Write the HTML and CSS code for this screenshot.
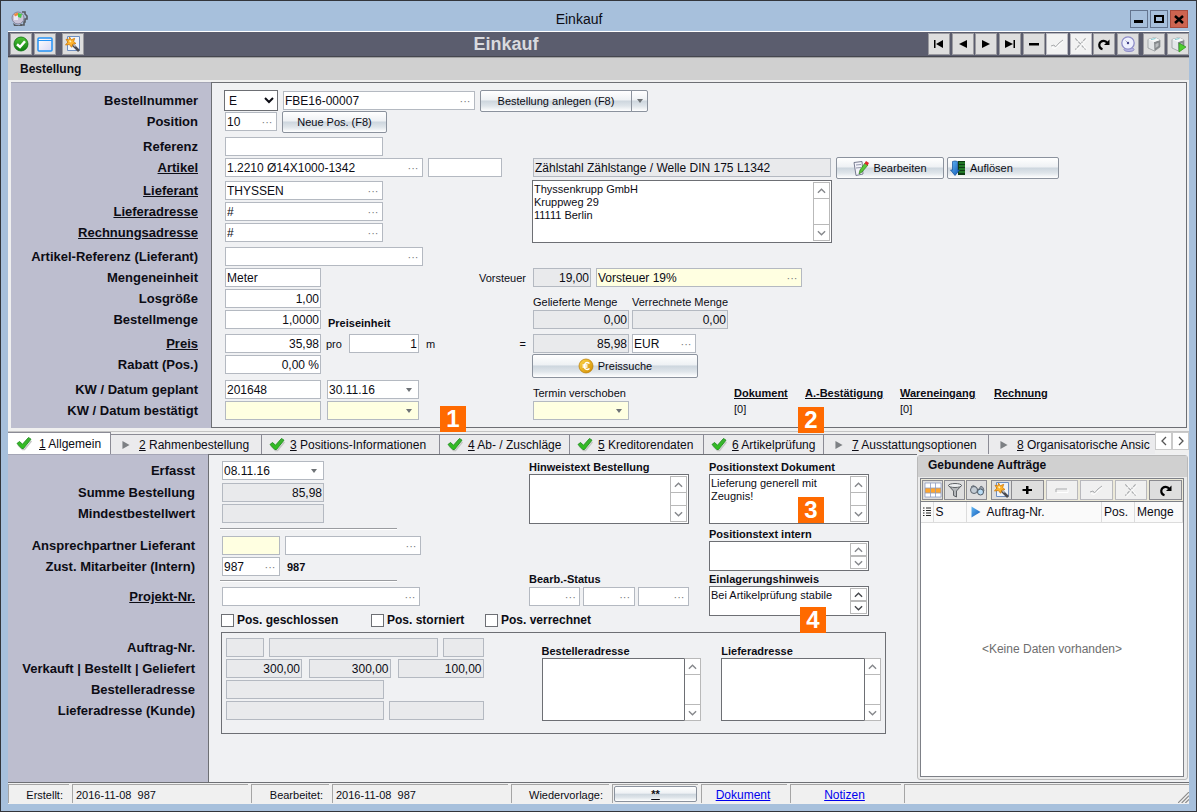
FILE: index.html
```html
<!DOCTYPE html>
<html lang="de">
<head>
<meta charset="utf-8">
<title>Einkauf</title>
<link rel="stylesheet" href="styles.css">
</head>
<body>
<svg class="defs" aria-hidden="true">
  <defs>
    <linearGradient id="gGreen" x1="0" y1="0" x2="0" y2="1"><stop offset="0" stop-color="#4fc436"/><stop offset="1" stop-color="#0c7d10"/></linearGradient>
    <linearGradient id="gCheck" x1="0" y1="0" x2="0" y2="1"><stop offset="0" stop-color="#3fae35"/><stop offset="1" stop-color="#2dc21c"/></linearGradient>
    <linearGradient id="gBlue" x1="0" y1="0" x2="1" y2="1"><stop offset="0" stop-color="#62b8f4"/><stop offset="1" stop-color="#1259b8"/></linearGradient>
    <linearGradient id="gPane" x1="0" y1="0" x2="1" y2="1"><stop offset="0" stop-color="#ffffff"/><stop offset="1" stop-color="#d8d8f4"/></linearGradient>
    <linearGradient id="gGold" x1="0" y1="0" x2="1" y2="1"><stop offset="0" stop-color="#ffd84a"/><stop offset="1" stop-color="#d08a00"/></linearGradient>
  </defs>
  <symbol id="up" viewBox="0 0 10 6"><path d="M1 5 5 1 9 5" fill="none" stroke="currentColor" stroke-width="1.5"/></symbol>
  <symbol id="down" viewBox="0 0 10 6"><path d="M1 1 5 5 9 1" fill="none" stroke="currentColor" stroke-width="1.5"/></symbol>
  <symbol id="tri" viewBox="0 0 6 4"><path d="M0 0H6L3 4Z" fill="#6e7276"/></symbol>
  <symbol id="check" viewBox="0 0 16 16"><path d="M2 9 6.500 13.500H8.500L15.500 5" fill="none" stroke="#c3c6c3" stroke-width="1.500"/><path d="M1 7.500 3.500 5.500 6.500 8.200 12.500 1.500 15 3.200 7.500 12.500H5.800Z" fill="url(#gCheck)" stroke="#1f8f1d" stroke-width=".9" stroke-linejoin="round"/></symbol>
  <symbol id="play" viewBox="0 0 8 9"><path d="M0 0 8 4.500 0 9Z" fill="#7d8084"/></symbol>
  <symbol id="wand" viewBox="0 0 18 18"><path d="M3.500 1.500H15.500V15.500H3.500Z" fill="#eef3fb" stroke="#6f8fc0"/><path d="M8 9 15 16" stroke="#4a4a50" stroke-width="2.600"/><path d="M9 9 11.500 11.500" stroke="#b9bcc4" stroke-width="1.500"/><path d="M5.500 2 7.300 4.800 10.700 3.300 9.600 6.500 12 8.600 8.800 9 7.600 12.300 5.400 9.500 1.500 10 3.800 7.200 2 4.200 5 5Z" fill="#ffb52e" stroke="#cf7a08" stroke-width=".8"/><path d="M5.500 5.500 7 7" stroke="#fff0b8" stroke-width="1.500"/></symbol>
  <symbol id="reload" viewBox="0 0 16 16"><path d="M6.500 13.200Q3 12 3.300 8.500 4 4.800 7.800 4.800 10 4.800 11.300 6.800" fill="none" stroke="#000" stroke-width="2.200"/><path d="M13.500 3.500V9H8Z"/></symbol>
  <symbol id="cube" viewBox="0 0 18 18"><path d="M3 4.500 10 2.500 15 5V12L9.500 16 3 13Z" fill="#e3e6e8" stroke="#8b9094" stroke-width=".7"/><path d="M9 7 15 5V12L9.500 16Z" fill="#85898c"/><path d="M10.500 9 13.500 7.800V11L10.500 13Z" fill="#b9bdbf"/><path d="M3 4.500 9 7 15 5 10 2.500Z" fill="#f6f8f8"/><path d="M6 4.500 10.500 3.500" stroke="#7cc7ce" stroke-width="1.200"/></symbol>
  <symbol id="tick" viewBox="0 0 16 12"><path d="M2 8 5 7 6.500 9 10 5 14 2" fill="none" stroke="#a9abad"/><path d="M3 9.500 6 10.500 14 3.500" fill="none" stroke="#fff"/></symbol>
  <symbol id="cross" viewBox="0 0 14 14"><path d="M2 2 11 12M11 2 2 12" fill="none" stroke="#a9abad" stroke-dasharray="3 1"/><path d="M3.500 2 12 11.500M12 3 3 13" stroke="#fff" stroke-width=".7"/></symbol>
</svg>

<div class="window">
  <header class="titlebar">
    <svg class="i18" viewBox="0 0 18 18"><path d="M12 2H15V4L17 6V9H15V12H14V15H10" fill="none" stroke="#55595f" stroke-width="1.600"/><circle cx="8" cy="8" r="6" fill="#c9c4d8" stroke="#85839a"/><path d="M4 6Q6 4 8 6V10H4Z" fill="#ece8f4"/><path d="M8 3 12 4 11 8 8 7Z" fill="#46c84a"/><path d="M4 4 8 2.500V5L5 6.500Z" fill="#ee8a3c"/><path d="M3 13Q8 17 12 14V16H4Z" fill="#55595f"/></svg>
    <h1 class="window-title">Einkauf</h1>
    <div class="window-buttons">
      <button class="wbtn" aria-label="Minimieren"><svg class="i16" viewBox="0 0 16 16"><path d="M3 9H12V12H3Z"/></svg></button>
      <button class="wbtn" aria-label="Maximieren"><svg class="i16" viewBox="0 0 16 16"><path d="M4 5H12V11H4Z" fill="none" stroke="#000" stroke-width="2"/></svg></button>
      <button class="wbtn close" aria-label="Schließen"><svg class="i16" viewBox="0 0 16 16"><path d="M4 5 12 12M12 5 4 12" stroke="#000" stroke-width="2.500"/></svg></button>
    </div>
  </header>

  <div class="client">
    <div class="toolbar">
      <button class="tbtn" aria-label="Übernehmen"><svg class="i18" viewBox="0 0 18 18"><circle cx="9" cy="9" r="7" fill="url(#gGreen)" stroke="#0b7010" stroke-width=".8"/><path d="M5 9.300 8 12 13 6.300" fill="none" stroke="#fff" stroke-width="2.500"/></svg></button>
      <button class="tbtn" aria-label="Fenster"><svg class="i18" viewBox="0 0 18 18"><rect x="2" y="3" width="14" height="13" rx="1" fill="url(#gPane)" stroke="#2493f5" stroke-width="1.500"/><path d="M2 5.500H16" stroke="#2493f5"/></svg></button>
      <button class="tbtn apart" aria-label="Assistent"><svg class="i18"><use href="#wand"/></svg></button>
      <h2 class="toolbar-title">Einkauf</h2>
      <div class="nav">
        <button class="tbtn" aria-label="Erster"><svg class="i16" viewBox="0 0 16 16"><path d="M3 4H4.500V12H3ZM12 4V12L5 8Z"/></svg></button>
        <button class="tbtn" aria-label="Zurück"><svg class="i16" viewBox="0 0 16 16"><path d="M12 4V12L4 8Z"/></svg></button>
        <button class="tbtn" aria-label="Weiter"><svg class="i16" viewBox="0 0 16 16"><path d="M4 4V12L12 8Z"/></svg></button>
        <button class="tbtn" aria-label="Letzter"><svg class="i16" viewBox="0 0 16 16"><path d="M11.500 4H13V12H11.500ZM3 4V12L11 8Z"/></svg></button>
        <button class="tbtn" aria-label="Löschen"><svg class="i16" viewBox="0 0 16 16"><path d="M3 7H13V9.500H3Z"/></svg></button>
        <button class="tbtn off" aria-label="Speichern" disabled><svg class="i16"><use href="#tick"/></svg></button>
        <button class="tbtn off" aria-label="Verwerfen" disabled><svg class="i16"><use href="#cross"/></svg></button>
        <button class="tbtn" aria-label="Aktualisieren"><svg class="i16"><use href="#reload"/></svg></button>
        <button class="tbtn" aria-label="Verlauf"><svg class="i18" viewBox="0 0 18 18"><ellipse cx="10" cy="14.500" rx="5" ry="2" fill="#b9b8e6" stroke="#8c8bc6"/><circle cx="9" cy="8" r="6.200" fill="#eef0fd" stroke="#8d8cc8" stroke-width="1.300"/><path d="M9 8 6.500 5.500" stroke="#aab"/><circle cx="9" cy="8" r="1.200" fill="#40418a"/></svg></button>
      </div>
      <button class="tbtn" aria-label="Paket"><svg class="i18"><use href="#cube"/></svg></button>
      <button class="tbtn" aria-label="Paket starten"><svg class="i18" viewBox="0 0 18 18"><use href="#cube"/><path d="M10 8 17 12 10 17Z" fill="#4fce2f" stroke="#2b8f1b" stroke-width=".7"/></svg></button>
    </div>

    <h3 class="section-head">Bestellung</h3>

    <section class="order">
      <div class="labels">
        <label class="lb" for="bn">Bestellnummer</label>
        <label class="lb" for="pos">Position</label>
        <label class="lb gap4" for="ref">Referenz</label>
        <a class="lb" href="#art">Artikel</a>
        <a class="lb gap2" href="#lief">Lieferant</a>
        <a class="lb" href="#la">Lieferadresse</a>
        <a class="lb" href="#ra">Rechnungsadresse</a>
        <label class="lb gap3" for="ar">Artikel-Referenz (Lieferant)</label>
        <label class="lb" for="me">Mengeneinheit</label>
        <label class="lb" for="lg">Losgröße</label>
        <label class="lb" for="bm">Bestellmenge</label>
        <a class="lb gap3" href="#pr">Preis</a>
        <label class="lb" for="rb">Rabatt (Pos.)</label>
        <label class="lb gap4" for="kg">KW / Datum geplant</label>
        <label class="lb" for="kb">KW / Datum bestätigt</label>
      </div>

      <div class="fields">
        <div class="row">
          <select class="kind" aria-label="Art"><option>E</option></select>
          <span class="box w192"><input id="bn" value="FBE16-00007"><button class="dots" aria-label="Auswahl">···</button></span>
          <span class="split"><button class="btn w152">Bestellung anlegen (F8)</button><button class="btn drop" aria-label="Mehr"><svg class="tri"><use href="#tri"/></svg></button></span>
        </div>
        <div class="row">
          <span class="box w52"><input id="pos" value="10"><button class="dots" aria-label="Auswahl">···</button></span>
          <button class="btn w105">Neue Pos. (F8)</button>
        </div>
        <div class="row gap4"><span class="box w158"><input id="ref"></span></div>

        <div class="split-cols">
          <div class="col-left">
            <div class="row">
              <span class="box w198"><input id="art" value="1.2210 Ø14X1000-1342"><button class="dots" aria-label="Auswahl">···</button></span>
              <span class="box w74"><input aria-label="Artikel Zusatz"></span>
            </div>
            <div class="row gap2"><span class="box w158"><input id="lief" value="THYSSEN"><button class="dots" aria-label="Auswahl">···</button></span></div>
            <div class="row"><span class="box w158"><input id="la" value="#"><button class="dots" aria-label="Auswahl">···</button></span></div>
            <div class="row"><span class="box w158"><input id="ra" value="#"><button class="dots" aria-label="Auswahl">···</button></span></div>
            <div class="row gap3"><span class="box w198"><input id="ar"><button class="dots" aria-label="Auswahl">···</button></span></div>
            <div class="row"><span class="box w96"><input id="me" value="Meter"></span><label class="small push" for="vs">Vorsteuer</label></div>
            <div class="row"><span class="box w96 num"><input id="lg" value="1,00"></span></div>
            <div class="row"><span class="box w96 num"><input id="bm" value="1,0000"></span><label class="smallb lead low" for="pe">Preiseinheit</label></div>
            <div class="row gap3">
              <span class="box w96 num"><input id="pr" value="35,98"></span>
              <span class="small">pro</span>
              <span class="box w70 num lead"><input id="pe" value="1"></span>
              <span class="small lead">m</span>
              <span class="small push">=</span>
            </div>
            <div class="row"><span class="box w96 num"><input id="rb" value="0,00 %"></span></div>
            <div class="row gap4 dates">
              <span class="box w96"><input id="kg" value="201648"></span>
              <span class="box w92"><input aria-label="Datum geplant" value="30.11.16"><button class="pick" aria-label="Kalender"><svg class="tri"><use href="#tri"/></svg></button></span>
            </div>
            <div class="row dates">
              <span class="box w96 yellow"><input id="kb"></span>
              <span class="box w92 yellow"><input aria-label="Datum bestätigt"><button class="pick" aria-label="Kalender"><svg class="tri"><use href="#tri"/></svg></button></span>
            </div>
          </div>

          <div class="col-right">
            <div class="row">
              <span class="box w298 ro"><input aria-label="Artikeltext" value="Zählstahl Zählstange / Welle DIN 175 L1342" readonly></span>
              <button class="btn w108"><svg class="i16" viewBox="0 0 16 16"><path d="M1 2.500 9 1.500 10 14 3 15.500Z" fill="#f4f4fb" stroke="#777c90"/><path d="M3 5 8 4.500M3 8 8 7.500" stroke="#9297ab"/><path d="M6 14 7 10 12 3 15 5 9 12Z" fill="#5cc63a" stroke="#2c7d1c" stroke-width=".7"/><path d="M11.500 3.500 13 1 16 3 14.500 5.500Z" fill="#e0262a"/></svg>Bearbeiten</button>
              <button class="btn w112 start"><svg class="i16" viewBox="0 0 16 16"><path d="M8 1H15V15H8Z" fill="#0f3d16"/><path d="M9 3H15M9 6H15M9 9H15M9 12H15" stroke="#37b53a" stroke-width="1.200"/><path d="M2.500 1.500Q5 .5 7.500 1.500V10H9.500L5 15.500.500 10H2.500Z" fill="url(#gBlue)" stroke="#0f4c9c" stroke-width=".7"/></svg>Auflösen</button>
            </div>
            <div class="memo w300 h63 tight">
              <textarea aria-label="Lieferantenadresse">Thyssenkrupp GmbH
Kruppweg 29
11111 Berlin</textarea>
              <span class="sb"><button aria-label="Hoch"><svg><use href="#up"/></svg></button><button aria-label="Runter"><svg><use href="#down"/></svg></button></span>
            </div>
            <div class="row vat">
              <span class="box w58 ro num"><input id="vs" value="19,00" readonly></span>
              <span class="box w206 yellow"><input aria-label="Vorsteuer Art" value="Vorsteuer 19%"><button class="dots" aria-label="Auswahl">···</button></span>
            </div>
            <div class="row low caption"><label class="small w96" for="gm">Gelieferte Menge</label><label class="small w96" for="vm">Verrechnete Menge</label></div>
            <div class="row caption">
              <span class="box w96 ro num"><input id="gm" value="0,00" readonly></span>
              <span class="box w96 ro num"><input id="vm" value="0,00" readonly></span>
            </div>
            <div class="row gap3 caption">
              <span class="box w96 ro num"><input aria-label="Betrag" value="85,98" readonly></span>
              <span class="box w64"><input aria-label="Währung" value="EUR"><button class="dots" aria-label="Auswahl">···</button></span>
            </div>
            <button class="btn w166 tall"><svg class="i16" viewBox="0 0 16 16"><circle cx="8" cy="8" r="7" fill="url(#gGold)" stroke="#b87800" stroke-width=".7"/><path d="M11.500 5.500Q8.500 3.200 6.800 6 5.500 9.500 7.500 11 9.500 12.200 11.500 10.500M4.500 7H9.500M4.500 9H9.500" fill="none" stroke="#fff" stroke-width="1.400"/></svg>Preissuche</button>
            <div class="bottom-line">
              <div class="stack w96">
                <label class="small" for="tv">Termin verschoben</label>
                <span class="box w96 yellow"><input id="tv"><button class="pick" aria-label="Kalender"><svg class="tri"><use href="#tri"/></svg></button></span>
              </div>
              <div class="docs">
                <div><a href="#dok">Dokument</a><span>[0]</span></div>
                <div><a href="#ab">A.-Bestätigung</a></div>
                <div><a href="#we">Wareneingang</a><span>[0]</span></div>
                <div><a href="#re">Rechnung</a></div>
              </div>
            </div>
          </div>
        </div>
      </div>
      <span class="badge b1">1</span>
      <span class="badge b2">2</span>
    </section>

    <nav class="tabs" role="tablist">
      <button class="tab t103 active" role="tab" aria-selected="true"><svg class="i16"><use href="#check"/></svg><span><u>1</u> Allgemein</span></button>
      <button class="tab t151" role="tab"><svg class="i16 play"><use href="#play"/></svg><span><u>2</u> Rahmenbestellung</span></button>
      <button class="tab t178" role="tab"><svg class="i16"><use href="#check"/></svg><span><u>3</u> Positions-Informationen</span></button>
      <button class="tab t130" role="tab"><svg class="i16"><use href="#check"/></svg><span><u>4</u> Ab- / Zuschläge</span></button>
      <button class="tab t134" role="tab"><svg class="i16"><use href="#check"/></svg><span><u>5</u> Kreditorendaten</span></button>
      <button class="tab t120" role="tab"><svg class="i16"><use href="#check"/></svg><span><u>6</u> Artikelprüfung</span></button>
      <button class="tab t165" role="tab"><svg class="i16 play"><use href="#play"/></svg><span><u>7</u> Ausstattungsoptionen</span></button>
      <button class="tab last" role="tab"><svg class="i16 play"><use href="#play"/></svg><span><u>8</u> Organisatorische Ansic</span></button>
      <span class="scroller"><button aria-label="Links"><svg class="i8" viewBox="0 0 6 10"><path d="M5 1 1 5 5 9" fill="none" stroke="#555" stroke-width="1.300"/></svg></button><button aria-label="Rechts"><svg class="i8" viewBox="0 0 6 10"><path d="M1 1 5 5 1 9" fill="none" stroke="#555" stroke-width="1.300"/></svg></button></span>
    </nav>

    <section class="details">
      <div class="labels">
        <label class="lb" for="er">Erfasst</label>
        <label class="lb gap1" for="sb">Summe Bestellung</label>
        <label class="lb" for="mb">Mindestbestellwert</label>
        <label class="lb gap11" for="ap">Ansprechpartner Lieferant</label>
        <label class="lb" for="zm">Zust. Mitarbeiter (Intern)</label>
        <a class="lb gap9" href="#pn">Projekt-Nr.</a>
        <label class="lb gap30" for="an">Auftrag-Nr.</label>
        <label class="lb" for="vb">Verkauft | Bestellt | Geliefert</label>
        <label class="lb" for="ba">Bestelleradresse</label>
        <label class="lb" for="lk">Lieferadresse (Kunde)</label>
      </div>

      <div class="detail-form">
        <div class="upper">
          <div class="col-a">
            <div class="row"><span class="box w102"><input id="er" value="08.11.16"><button class="pick" aria-label="Kalender"><svg class="tri"><use href="#tri"/></svg></button></span></div>
            <div class="row gap1"><span class="box w102 ro num"><input id="sb" value="85,98" readonly></span></div>
            <div class="row"><span class="box w102 ro"><input id="mb" readonly></span></div>
            <hr class="rule">
            <div class="row"><span class="box w58 yellow"><input id="ap"></span><span class="box w136"><input aria-label="Name"><button class="dots" aria-label="Auswahl">···</button></span></div>
            <div class="row"><span class="box w58"><input id="zm" value="987"><button class="dots" aria-label="Auswahl">···</button></span><span class="smallb lead">987</span></div>
            <hr class="rule short">
            <div class="row"><span class="box w198"><input id="pn"><button class="dots" aria-label="Auswahl">···</button></span></div>
          </div>
          <div class="col-b">
            <label class="smallb" for="hb">Hinweistext Bestellung</label>
            <div class="memo h50"><textarea id="hb"></textarea><span class="sb"><button aria-label="Hoch"><svg><use href="#up"/></svg></button><button aria-label="Runter"><svg><use href="#down"/></svg></button></span></div>
            <label class="smallb status" for="s1">Bearb.-Status</label>
            <div class="row tri-fields">
              <span class="box"><input id="s1"><button class="dots" aria-label="Auswahl">···</button></span>
              <span class="box"><input aria-label="Status 2"><button class="dots" aria-label="Auswahl">···</button></span>
              <span class="box"><input aria-label="Status 3"><button class="dots" aria-label="Auswahl">···</button></span>
            </div>
          </div>
          <div class="col-c">
            <label class="smallb" for="pd">Positionstext Dokument</label>
            <div class="memo h50"><textarea id="pd">Lieferung generell mit
Zeugnis!</textarea><span class="sb"><button aria-label="Hoch"><svg><use href="#up"/></svg></button><button aria-label="Runter"><svg><use href="#down"/></svg></button></span></div>
            <label class="smallb gap3" for="pi">Positionstext intern</label>
            <div class="memo h30"><textarea id="pi"></textarea><span class="sb"><button aria-label="Hoch"><svg><use href="#up"/></svg></button><button aria-label="Runter"><svg><use href="#down"/></svg></button></span></div>
            <label class="smallb gap1" for="eh">Einlagerungshinweis</label>
            <div class="memo h30 dark"><textarea id="eh">Bei Artikelprüfung stabile</textarea><span class="sb"><button aria-label="Hoch"><svg><use href="#up"/></svg></button><button aria-label="Runter"><svg><use href="#down"/></svg></button></span></div>
          </div>
        </div>

        <div class="checks">
          <label class="ck"><input type="checkbox">Pos. geschlossen</label>
          <label class="ck"><input type="checkbox">Pos. storniert</label>
          <label class="ck"><input type="checkbox">Pos. verrechnet</label>
        </div>

        <div class="group">
          <div class="group-fields">
            <div class="row"><span class="box w38 ro"><input id="an" readonly></span><span class="box ro grow"><input aria-label="Auftrag" readonly></span><span class="box w41 ro"><input aria-label="Auftragsposition" readonly></span></div>
            <div class="row wide"><span class="box w76 ro num"><input id="vb" value="300,00" readonly></span><span class="box ro num grow"><input aria-label="Bestellt" value="300,00" readonly></span><span class="box w86 ro num"><input aria-label="Geliefert" value="100,00" readonly></span></div>
            <div class="row"><span class="box w158 ro"><input id="ba" readonly></span></div>
            <div class="row"><span class="box w158 ro"><input id="lk" readonly></span><span class="box ro grow"><input aria-label="Lieferadresse 2" readonly></span></div>
          </div>
          <div class="address"><label class="smallb" for="bx">Bestelleradresse</label><div class="memo h63 flush"><textarea id="bx"></textarea><span class="sb"><button aria-label="Hoch"><svg><use href="#up"/></svg></button><button aria-label="Runter"><svg><use href="#down"/></svg></button></span></div></div>
          <div class="address"><label class="smallb" for="lx">Lieferadresse</label><div class="memo h63 flush"><textarea id="lx"></textarea><span class="sb"><button aria-label="Hoch"><svg><use href="#up"/></svg></button><button aria-label="Runter"><svg><use href="#down"/></svg></button></span></div></div>
        </div>
        <span class="badge b3">3</span>
        <span class="badge b4">4</span>
      </div>

      <aside class="bound">
        <h3 class="bound-head">Gebundene Aufträge</h3>
        <div class="bound-body">
          <div class="bound-tools">
            <button class="gbtn" aria-label="Spalten"><svg class="i18" viewBox="0 0 18 18"><path d="M1 2H17V16H1Z" fill="#fff"/><path d="M1 7H17V12H1Z" fill="#ffa62e"/><path d="M1 2H17V16H1ZM1 7H17M1 12H17M6.500 2V16M11.500 2V16" fill="none" stroke="#8d9cc0" stroke-width=".8"/></svg></button>
            <button class="gbtn" aria-label="Filter"><svg class="i16" viewBox="0 0 16 16"><path d="M1.500 3.500 6.500 9V13.500L9.500 15V9L14.500 3.500Z" fill="#b4b7ba" stroke="#5e6266"/><ellipse cx="8" cy="3.500" rx="6.500" ry="2" fill="#eceef0" stroke="#5e6266"/></svg></button>
            <button class="gbtn" aria-label="Suchen"><svg class="i16" viewBox="0 0 16 16"><path d="M2 5Q4 2 7 5L9 8 12 4Q15 5 15 9L12 12" fill="#9aa3ad" stroke="#5c646d" stroke-width=".8"/><circle cx="5" cy="8" r="3.500" fill="#c3ccd4" stroke="#5c646d"/><circle cx="11.500" cy="10" r="3" fill="#b9dcf4" stroke="#4d5963"/></svg></button>
            <button class="gbtn first" aria-label="Assistent"><svg class="i18"><use href="#wand"/></svg></button>
            <button class="gbtn wide joined" aria-label="Neu"><svg class="i16" viewBox="0 0 16 16"><path d="M7 4H9.500V7H13V9H9.500V12H7V9H3.500V7H7Z"/></svg></button>
            <button class="gbtn wide off" aria-label="Löschen" disabled><svg class="i16" viewBox="0 0 16 16"><path d="M2 10V7H13" fill="none" stroke="#a9abad"/><path d="M3 10.500H14V7.500" fill="none" stroke="#fff"/></svg></button>
            <button class="gbtn wide off" aria-label="Speichern" disabled><svg class="i16"><use href="#tick"/></svg></button>
            <button class="gbtn wide off" aria-label="Verwerfen" disabled><svg class="i16"><use href="#cross"/></svg></button>
            <button class="gbtn wide" aria-label="Aktualisieren"><svg class="i16"><use href="#reload"/></svg></button>
          </div>
          <div class="grid">
            <table>
              <thead><tr><th class="c1"><svg class="list" viewBox="0 0 8 10"><path d="M0 1H1.500M0 3.500H1.500M0 6H1.500M0 8.500H1.500M3 1H8M3 3.500H8M3 6H8M3 8.500H8" stroke="#222"/></svg></th><th class="c2">S</th><th class="c3"><span><svg class="arrow" viewBox="0 0 10 12"><path d="M.5.500 9.500 6 .5 11.500Z" fill="url(#gBlue)"/></svg>Auftrag-Nr.</span></th><th class="c4">Pos.</th><th class="c5">Menge</th></tr></thead>
            </table>
            <p class="empty">&lt;Keine Daten vorhanden&gt;</p>
          </div>
        </div>
      </aside>
    </section>

    <footer class="status-bar">
      <span class="cell s61 right">Erstellt:</span>
      <span class="cell s176">2016-11-08&nbsp; 987</span>
      <span class="cell s78 right">Bearbeitet:</span>
      <span class="cell s176">2016-11-08&nbsp; 987</span>
      <span class="cell s98 right">Wiedervorlage:</span>
      <span class="cell s86 bare"><button class="btn remind">**</button></span>
      <span class="cell s86 mid"><a href="#dokument">Dokument</a></span>
      <span class="cell s111 mid"><a href="#notizen">Notizen</a></span>
      <span class="cell rest"><svg class="grip" viewBox="0 0 12 12"><path d="M0 12 12 0M4 12 12 4M8 12 12 8" stroke="#8b8b8b" stroke-width="1.300"/></svg></span>
    </footer>
  </div>
</div>
</body>
</html>
```
FILE: styles.css
```css
* { box-sizing: border-box; }
body { margin: 0; font: 12px/16px "Liberation Sans", Arial, sans-serif; color: #0c0c14; }
h1, h2, h3, p { margin: 0; }
button, input, select, textarea { font: inherit; color: inherit; margin: 0; padding: 0; }
button { border: 0; background: none; }
svg { display: block; flex: none; }
.defs { position: absolute; width: 0; height: 0; }
.i16 { width: 16px; height: 16px; }
.i18 { width: 18px; height: 18px; }
.i8 { width: 6px; height: 10px; }
.tri { width: 6px; height: 4px; }

.window { min-height: 100vh; display: flex; flex-direction: column; background: #a7c0dc; border: 1px solid #32353b; padding: 0 7px 7px; }
.titlebar { height: 30px; display: flex; align-items: center; padding: 6px 1px 0 2px; }
.window-title { flex: 1; text-align: center; font: 14px/20px "Liberation Sans", Arial, sans-serif; }
.window-buttons { display: flex; gap: 2px; }
.wbtn { width: 18px; height: 18px; border: 1px solid #64758f; display: grid; place-items: center; }
.wbtn.close { background: #cd6450; border-color: #a84a3c; }

.client { flex: 1; display: flex; flex-direction: column; background: #f0f0f0; border-top: 1px solid #fff; }
.toolbar { height: 25px; display: flex; align-items: center; gap: 2px; padding: 0 0 0 2px; background: #5b5d6e; border-bottom: 1px solid #45464f; }
.tbtn { width: 22px; height: 22px; display: grid; place-items: center; flex: none; background: #dedede; border: 1px solid #9b9ba0; }
.tbtn.apart { margin-left: 4px; }
.tbtn.off { background: #f2f2f2; border-color: #b9b9c0; }
.toolbar-title { flex: 1; text-align: center; font-size: 18px; line-height: 24px; color: #d9dade; }
.nav { width: 211px; display: flex; justify-content: space-between; margin-right: 2px; }

.section-head { height: 23px; border-top: 1px solid #a2a2a2; background: #d0d0d0; font-size: 12px; line-height: 23px; padding-left: 12px; }

.order { position: relative; display: flex; margin: 2px 2px 3px 3px; }
.labels { width: 200px; flex: none; display: flex; flex-direction: column; padding: 7px 13px 0 0; background: #bdbecf; border-top: 1px solid #a5a6b6; }
.lb { height: 21px; font-weight: bold; font-size: 13px; line-height: 21px; text-align: right; color: inherit; white-space: nowrap; }
.gap1 { margin-top: 1px; }
.gap2 { margin-top: 2px; }
.gap3 { margin-top: 3px; }
.gap4 { margin-top: 4px; }
.gap9 { margin-top: 9px; }
.gap11 { margin-top: 11px; }
.gap30 { margin-top: 30px; }

.fields { flex: 1; min-width: 0; background: #f0f1f3; border: 1px solid #6d6f74; padding: 7px 0 6px 13px; }
.row { display: flex; align-items: center; height: 21px; gap: 5px; }
.split-cols { display: flex; gap: 6px; }
.col-left { width: 301px; flex: none; }
.col-right .row, .bottom-line { padding-left: 1px; }
.dates { gap: 6px; }
.box { display: flex; align-items: center; height: 19px; flex: none; border: 1px solid #b4b9c1; background: #fff; }
.box input { flex: 1; width: 0; min-width: 0; height: 17px; border: 0; background: none; outline: 0; padding: 0 1px; }
.box.num input { text-align: right; }
.box.ro { background: #e9eaec; }
.box.yellow { background: #ffffe1; }
.dots { width: 18px; font-size: 11px; line-height: 12px; color: #77797d; }
.pick { width: 18px; height: 17px; display: grid; place-items: center; }
.kind { width: 54px; height: 21px; margin-left: -1px; border: 1px solid #6d6f74; background: #fff; }
.grow { flex: 1; }
.lead { margin-left: 2px; }
.push { margin-left: auto; }
.low { padding-top: 6px; }
.small { font-size: 11px; line-height: 14px; white-space: nowrap; }
.smallb { display: block; font-size: 11px; line-height: 14px; font-weight: bold; white-space: nowrap; }
.w38 { width: 38px; } .w41 { width: 41px; } .w52 { width: 52px; } .w58 { width: 58px; } .w64 { width: 64px; }
.w70 { width: 70px; } .w74 { width: 74px; } .w76 { width: 76px; } .w86 { width: 86px; } .w92 { width: 92px; }
.w96 { width: 96px; } .w102 { width: 102px; } .w105 { width: 105px; } .w108 { width: 108px; } .w112 { width: 112px; }
.w136 { width: 136px; } .w152 { width: 152px; } .w158 { width: 158px; } .w166 { width: 166px; } .w192 { width: 192px; }
.w198 { width: 198px; } .w206 { width: 206px; } .w298 { width: 298px; } .w300 { width: 300px; }

.btn { height: 22px; flex: none; display: flex; align-items: center; justify-content: center; gap: 4px; font-size: 11px; border: 1px solid #8b929d; border-radius: 2px; background: linear-gradient(#fff 0, #eef1f4 45%, #cdd6de 50%, #dfe5ea 75%, #fff 100%); }
.btn.tall { height: 24px; }
.btn.start { justify-content: flex-start; padding-left: 2px; margin-left: -2px; }
.split { display: flex; }
.split .w152 { border-radius: 2px 0 0 2px; }
.split .drop { width: 17px; margin-left: -1px; border-radius: 0 2px 2px 0; }

.memo { display: flex; border: 1px solid #6d6f74; background: #fff; }
.memo textarea { flex: 1; width: 0; border: 0; outline: 0; resize: none; overflow: hidden; background: none; padding: 2px 1px; font: 11px/13px "Liberation Sans", Arial, sans-serif; }
.h30 { height: 30px; } .h50 { height: 50px; } .h63 { height: 63px; }
.sb { width: 17px; margin: 1px; flex: none; display: flex; flex-direction: column; justify-content: space-between; border: 1px solid #b9b9b9; color: #85878b; }
.sb button { height: 16px; display: grid; place-items: center; }
.sb button:first-child { border-bottom: 1px solid #b9b9b9; }
.sb button:last-child { border-top: 1px solid #b9b9b9; }
.sb svg { width: 9px; height: 6px; }
.h30 .sb button { height: 13px; }
.dark .sb { color: #44464a; }
.flush .sb { margin: -1px; border-left-color: #6d6f74; }
.tight { margin-top: 2px; }
.vat { margin-top: 24px; }
.caption { gap: 3px; }

.bottom-line { display: flex; margin-top: 8px; }
.stack { display: flex; flex-direction: column; gap: 1px; }
.docs { display: grid; grid-template-columns: 71px 95px 94px auto; margin-left: 105px; font-size: 11px; line-height: 14px; }
.docs a { display: block; color: inherit; font-weight: bold; margin-bottom: 2px; }
.badge { position: absolute; width: 26px; height: 26px; background: #ff6a00; color: #fff; font: bold 24px/26px "Liberation Sans", Arial, sans-serif; text-align: center; }
.b1 { left: 429px; top: 324px; }
.b2 { left: 787px; top: 325px; }
.b3 { left: 589px; top: 42px; }
.b4 { left: 591px; top: 152px; }

.tabs { display: flex; align-items: flex-end; height: 23px; border-top: 1px solid #c4c4c4; overflow: hidden; }
.tab { height: 20px; flex: none; display: flex; align-items: center; gap: 5px; padding: 0 0 0 7px; background: #ebebed; border: solid #8b8b95; border-width: 1px 1px 0 0; white-space: nowrap; }
.tab.active { height: 22px; background: #fff; padding-left: 8px; gap: 7px; }
.tab.last { flex: 1; min-width: 0; border-right: 0; overflow: hidden; }
.t103 { width: 103px; } .t120 { width: 120px; } .t130 { width: 130px; } .t134 { width: 134px; } .t151 { width: 151px; } .t165 { width: 165px; } .t178 { width: 178px; }
.play { padding: 4px; }
.scroller { display: flex; align-self: flex-start; flex: none; }
.scroller button { width: 17px; height: 18px; display: grid; place-items: center; background: #fff; border: 1px solid #cacaca; }

.details { flex: 1; display: flex; border-bottom: 1px solid #6d6f74; background: #f0f1f3; }
.details .labels { padding-top: 5px; }
.detail-form { position: relative; flex: 1; min-width: 0; border: solid #6d6f74; border-width: 1px 0 0 1px; padding: 5px 0 0 12px; }
.upper { display: flex; }
.col-a { width: 308px; flex: none; padding-left: 1px; }
.rule { width: 177px; height: 2px; border: 0; margin: 4px 0 5px -2px; background: #9a9ca0; border-bottom: 1px solid #fff; }
.rule.short { margin: 3px 0 4px -2px; }
.col-b { width: 160px; flex: none; }
.col-c { width: 160px; flex: none; margin-left: 20px; }
.status { margin-top: 48px; }
.tri-fields { gap: 3px; }
.tri-fields .box { flex: 1; }
.checks { display: grid; grid-template-columns: 150px 114px auto; width: 420px; margin-top: -4px; }
.ck { display: flex; align-items: center; gap: 3px; height: 16px; font-size: 12px; font-weight: bold; }
.ck input { appearance: none; width: 13px; height: 13px; border: 1px solid #6d6f74; background: #fff; }
.group { width: 665px; display: flex; margin-top: 4px; padding: 4px 4px 12px; border: 1px solid #6d6f74; }
.group-fields { width: 258px; margin-right: 58px; }
.group .wide { gap: 7px; }
.address { width: 160px; margin: 7px 20px 0 0; }
.address:last-child { margin-right: 0; }

.bound { width: 271px; flex: none; display: flex; flex-direction: column; margin: 1px 1px 2px 0; border: 1px solid #b9b9b9; border-radius: 3px; background: #ebebeb; }
.bound-head { height: 21px; background: #d0d0d0; font-size: 12px; line-height: 18px; padding-left: 10px; }
.bound-body { flex: 1; display: flex; flex-direction: column; margin: 1px 3px 2px 2px; border: 1px solid #7d8087; background: #fff; }
.bound-tools { display: flex; gap: 1px; padding: 1px; background: #ece9d8; }
.gbtn { width: 21px; height: 20px; display: grid; place-items: center; background: #dedede; border: 1px solid #8b8b90; }
.gbtn.first { margin-left: 3px; }
.gbtn.wide { flex: 1; width: 0; margin-right: 1px; }
.gbtn.joined { margin-left: -2px; }
.gbtn.off { background: #f0f0f0; border-color: #b9b9bd; }
.gbtn:last-child { margin-right: 0; }
.grid { flex: 1; display: flex; flex-direction: column; border-top: 1px solid #7d8087; }
.grid table { width: 100%; border-collapse: collapse; table-layout: fixed; }
.grid th { height: 20px; padding: 0 2px; font-weight: normal; text-align: left; background: #fafafa; border: solid #dcdcdc; border-width: 0 1px 1px 0; white-space: nowrap; }
.grid th span { display: flex; align-items: center; gap: 6px; padding-left: 2px; }
.c1 { width: 12px; } .c2 { width: 33px; } .c4 { width: 33px; } .c5 { width: 48px; }
.list { width: 8px; height: 10px; }
.arrow { width: 10px; height: 12px; }
.empty { flex: 1; display: grid; place-items: center; color: #6e6e6e; }

.status-bar { display: flex; gap: 3px; padding-top: 1px; height: 21px; background: #f0f0f0; }
.cell { flex: none; height: 19px; padding: 0 6px 0 3px; border: solid #a5a5a5; border-width: 1px 0 0 1px; line-height: 20px; white-space: nowrap; font-size: 11px; }
.right { text-align: right; }
.mid { text-align: center; }
.cell a { color: #0000ee; font-size: 12px; }
.s61 { width: 61px; } .s78 { width: 78px; } .s86 { width: 86px; } .s98 { width: 98px; } .s111 { width: 111px; } .s176 { width: 176px; }
.bare { padding: 1px 1px 0; }
.remind { width: 100%; height: 16px; font-weight: bold; text-decoration: underline; }
.rest { flex: 1; display: flex; justify-content: flex-end; align-items: flex-end; padding: 0; }
.grip { width: 11px; height: 11px; }
```
